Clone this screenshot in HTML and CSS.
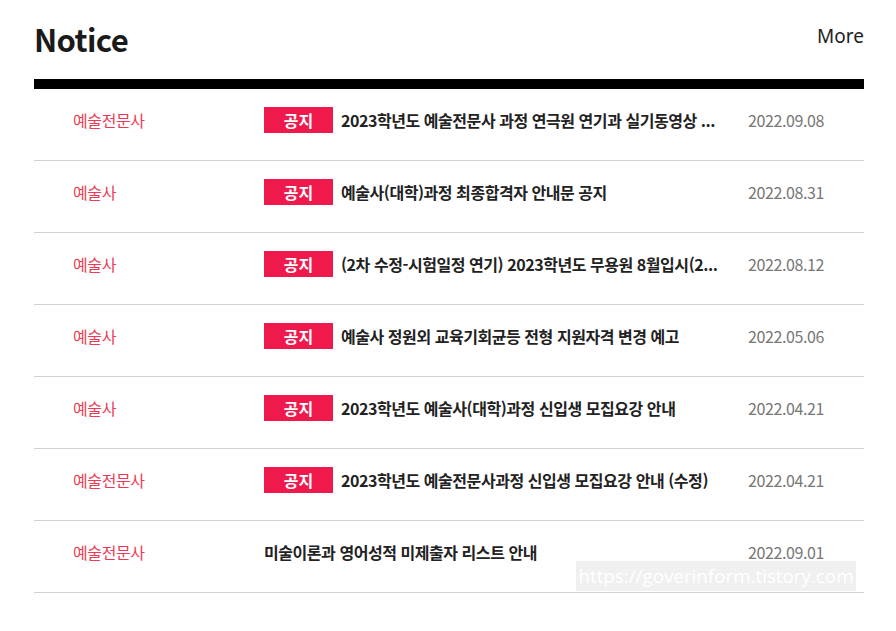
FILE: index.html
```html
<!DOCTYPE html>
<html lang="ko">
<head>
<meta charset="utf-8">
<link rel="stylesheet" href="styles.css">
</head>
<body>
<div class="board">
  <div class="head">
    <h2 class="title">Notice</h2>
    <a class="more">More</a>
  </div>
  <ul class="list">
    <li class="row"><span class="cat">예술전문사</span><span class="subj"><span class="badge">공지</span><span class="txt">2023학년도 예술전문사 과정 연극원 연기과 실기동영상 ...</span></span><span class="date">2022.09.08</span></li>
    <li class="row"><span class="cat">예술사</span><span class="subj"><span class="badge">공지</span><span class="txt">예술사(대학)과정 최종합격자 안내문 공지</span></span><span class="date">2022.08.31</span></li>
    <li class="row"><span class="cat">예술사</span><span class="subj"><span class="badge">공지</span><span class="txt">(2차 수정-시험일정 연기) 2023학년도 무용원 8월입시(2...</span></span><span class="date">2022.08.12</span></li>
    <li class="row"><span class="cat">예술사</span><span class="subj"><span class="badge">공지</span><span class="txt">예술사 정원외 교육기회균등 전형 지원자격 변경 예고</span></span><span class="date">2022.05.06</span></li>
    <li class="row"><span class="cat">예술사</span><span class="subj"><span class="badge">공지</span><span class="txt">2023학년도 예술사(대학)과정 신입생 모집요강 안내</span></span><span class="date">2022.04.21</span></li>
    <li class="row"><span class="cat">예술전문사</span><span class="subj"><span class="badge">공지</span><span class="txt">2023학년도 예술전문사과정 신입생 모집요강 안내 (수정)</span></span><span class="date">2022.04.21</span></li>
    <li class="row"><span class="cat">예술전문사</span><span class="subj"><span class="txt">미술이론과 영어성적 미제출자 리스트 안내</span></span><span class="date">2022.09.01</span></li>
  </ul>
  <div class="watermark">https://goverinform.tistory.com</div>
</div>
</body>
</html>
```
FILE: styles.css
```css
html, body { margin: 0; padding: 0; background: #fff; }
body { font-family: "Noto Sans CJK KR", "Noto Sans", sans-serif; color: #222; }
.board { position: relative; margin: 0 32px 0 34px; width: 830px; }
.head { display: flex; justify-content: space-between; align-items: flex-start; height: 79px; border-bottom: 10px solid #000; }
.title { margin: 19px 0 0 0; font-size: 31px; font-weight: 700; line-height: 40px; color: #1a1a1a; font-family: "Noto Sans CJK KR", sans-serif; letter-spacing: -0.6px; }
.more { margin-top: 22px; font-size: 19px; line-height: 28px; color: #222; font-family: "Noto Sans", sans-serif; cursor: pointer; }
.list { list-style: none; margin: 0; padding: 0; }
.row { display: flex; align-items: center; box-sizing: border-box; height: 72px; padding-bottom: 10px; border-bottom: 1px solid #d2d2d2; font-size: 16px; }
.cat { width: 191px; padding-left: 39px; color: #eb3a52; flex: none; letter-spacing: -0.4px; }
.subj { width: 456px; display: flex; align-items: center; flex: none; min-width: 0; }
.badge { flex: none; width: 69px; height: 26px; line-height: 26px; background: #f0194b; color: #fff; font-weight: 700; text-align: center; margin-right: 8px; }
.txt { font-weight: 700; color: #222; white-space: nowrap; overflow: hidden; text-overflow: ellipsis; min-width: 0; letter-spacing: -0.45px; }
.date { margin-left: 28px; color: #777; letter-spacing: -0.4px; }
.watermark { position: absolute; left: 542px; top: 561px; width: 280px; height: 30px; background: #f0f0f0; color: #fff; font-size: 18.8px; line-height: 30px; text-align: center; font-family: "Open Sans", sans-serif; overflow: hidden; white-space: nowrap; }
```
